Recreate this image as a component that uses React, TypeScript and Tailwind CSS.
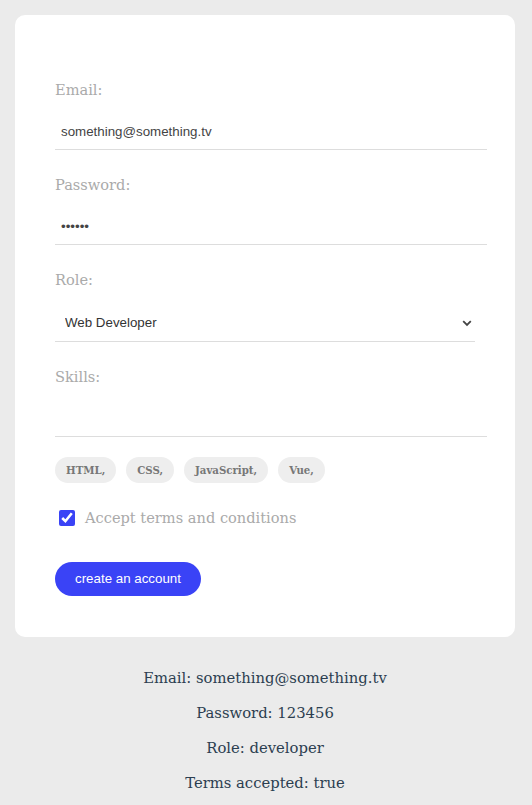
import React from "react";

const labelCls =
  "block text-[#aaa] text-[14.6px] leading-[19px] mt-[25px] mb-[15px] font-['DejaVu_Serif',serif]";
const inputCls =
  "block box-content w-full px-[6px] py-[10px] border-0 border-b border-[#ddd] text-[#444] text-[13.333px] leading-[15px] font-['Liberation_Sans',sans-serif] outline-none bg-white";
const pillCls =
  "inline-block mr-[10px] px-[11px] py-[6px] leading-[14px] rounded-[20px] bg-[#eee] text-[#777] text-[10.2px] font-bold font-['DejaVu_Serif',serif]";
const outCls =
  "text-center my-[16px] leading-[19px] text-[#2c3e50] text-[14.8px] font-['DejaVu_Serif',serif]";

export default function App() {
  return (
    <div className="min-h-screen bg-[#ebebeb] pt-[15px] pb-[1px]">
      <div className="w-[530px]">
        <form
          className="mx-auto w-[500px] bg-white rounded-[10px] px-[40px] pt-[40px] pb-[41px] mb-[31px]"
          onSubmit={(e) => e.preventDefault()}
        >
          <label className={labelCls}>Email:</label>
          <input type="email" defaultValue="something@something.tv" className={inputCls} />

          <label className={labelCls}>Password:</label>
          <input type="password" defaultValue="123456" className={inputCls} />

          <label className={labelCls}>Role:</label>
          <div className="relative">
            <select
              defaultValue="developer"
              className="block w-full h-[38px] appearance-none pl-[10px] pr-[24px] border-0 border-b border-[#ddd] text-[#333] text-[13.333px] leading-[15px] font-['Liberation_Sans',sans-serif] outline-none bg-white"
            >
              <option value="developer">Web Developer</option>
              <option value="designer">Web Designer</option>
            </select>
            <svg
              className="absolute right-[3px] top-[16px] pointer-events-none"
              width="10"
              height="7"
              viewBox="0 0 10 7"
            >
              <path d="M1.2 1.2 L5 5 L8.8 1.2" fill="none" stroke="#444" strokeWidth="1.8" />
            </svg>
          </div>

          <label className={labelCls}>Skills:</label>
          <input type="text" className={inputCls} />

          <div className="mt-[20px] flex">
            <div className={pillCls}>HTML,</div>
            <div className={pillCls}>CSS,</div>
            <div className={pillCls}>JavaScript,</div>
            <div className={pillCls}>Vue,</div>
          </div>

          <div className="flex items-center mt-[25px] mb-[15px]">
            <input
              type="checkbox"
              defaultChecked
              className="w-4 h-4 ml-[4px] m-0 accent-[#3a43f6]"
            />
            <label className="ml-[10px] text-[#aaa] text-[14.6px] leading-[19px] font-['DejaVu_Serif',serif]">
              Accept terms and conditions
            </label>
          </div>

          <div>
            <button
              type="submit"
              className="mt-[20px] px-[20px] py-[10px] leading-[14px] rounded-[20px] bg-[#3a43f6] text-white text-[13.333px] font-['Liberation_Sans',sans-serif]"
            >
              create an account
            </button>
          </div>
        </form>

        <p className={outCls}>Email: something@something.tv</p>
        <p className={outCls}>Password: 123456</p>
        <p className={outCls}>Role: developer</p>
        <p className={outCls}>Terms accepted: true</p>
      </div>
    </div>
  );
}
